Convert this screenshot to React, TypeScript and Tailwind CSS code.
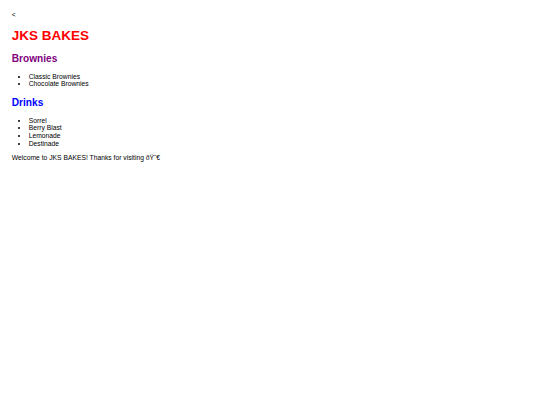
export default function App() {
  return (
    <div className="bg-white text-black font-['Liberation_Sans',Arial,sans-serif] text-[6.75px] leading-[7.65px] px-[11.8px] pt-[11.3px] pb-[4px]">
      <div>&lt;</div>
      <h1 className="text-[13.5px] font-bold text-[#ff0000] my-[9.05px] leading-[15.6px]">JKS BAKES</h1>
      <h2 className="text-[10.125px] font-bold text-[#800080] my-[8.4px] leading-[11.8px]">Brownies</h2>
      <ul className="list-disc pl-[16.875px] my-[6.75px]">
        <li>Classic Brownies</li>
        <li>Chocolate Brownies</li>
      </ul>
      <h2 className="text-[10.125px] font-bold text-[#0000ff] my-[8.4px] leading-[11.8px]">Drinks</h2>
      <ul className="list-disc pl-[16.875px] my-[6.75px]">
        <li>Sorrel</li>
        <li>Berry Blast</li>
        <li>Lemonade</li>
        <li>Destinade</li>
      </ul>
      <p className="my-[6.5px]">Welcome to JKS BAKES! Thanks for visiting {"\u00F0\u0178\u02DC\u20AC"}</p>
    </div>
  );
}
